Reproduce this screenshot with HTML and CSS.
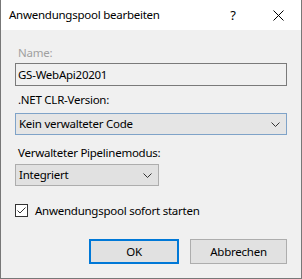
FILE: index.html
```html
<!DOCTYPE html>
<html lang="de">
<head>
    <meta charset="UTF-8">
    <title>Anwendungspool bearbeiten</title>
    <link rel="stylesheet" href="styles.css">
</head>
<body>
    <div class="dialog">
        <div class="titlebar">
            <span class="title">Anwendungspool bearbeiten</span>
            <span class="help">?</span>
            <span class="close">
                <svg width="11" height="11" viewBox="0 0 11 11">
                    <path d="M0.5 0.5 L10.5 10.5 M10.5 0.5 L0.5 10.5" stroke="#000" stroke-width="1" fill="none"/>
                </svg>
            </span>
        </div>

        <div class="content">
            <label class="label disabled lbl-name">Name:</label>
            <div class="textbox">GS-WebApi20201</div>

            <label class="label lbl-clr">.NET CLR-Version:</label>
            <div class="combo focused">
                <span>Kein verwalteter Code</span>
                <svg class="chevron" width="9" height="5" viewBox="0 0 9 5">
                    <path d="M0.5 0.5 L4.5 4.5 L8.5 0.5" stroke="#333" stroke-width="1" fill="none"/>
                </svg>
            </div>

            <label class="label lbl-pipe">Verwalteter Pipelinemodus:</label>
            <div class="combo small">
                <span>Integriert</span>
                <svg class="chevron" width="9" height="5" viewBox="0 0 9 5">
                    <path d="M0.5 0.5 L4.5 4.5 L8.5 0.5" stroke="#333" stroke-width="1" fill="none"/>
                </svg>
            </div>

            <div class="check-row">
                <span class="checkbox">
                    <svg width="11" height="11" viewBox="0 0 11 11">
                        <path d="M1.5 5.5 L4 8 L9.5 2.5" stroke="#333" stroke-width="1" fill="none"/>
                    </svg>
                </span>
                <span>Anwendungspool sofort starten</span>
            </div>

            <div class="buttons">
                <button class="btn btn-ok">OK</button>
                <button class="btn btn-cancel">Abbrechen</button>
            </div>
        </div>
    </div>
</body>
</html>
```

FILE: styles.css
```css
body {
    margin: 0;
    padding: 0;
    font-family: "Noto Sans", "Liberation Sans", sans-serif;
    font-size: 11.5px;
    letter-spacing: -0.25px;
    color: #000;
}

.dialog {
    width: 302px;
    height: 279px;
    box-sizing: border-box;
    border: 1px solid #777;
    border-top: none;
    background-color: #f0f0f0;
    display: flex;
    flex-direction: column;
}

.titlebar {
    height: 30px;
    background-color: #fff;
    display: flex;
    align-items: center;
    padding-left: 8px;
    flex-shrink: 0;
}

.title {
    flex: 1;
    line-height: 16px;
}

.help {
    width: 46px;
    text-align: center;
    font-size: 13px;
    margin-right: 0;
}

.close {
    width: 45px;
    display: flex;
    justify-content: center;
    align-items: center;
}

.content {
    padding: 0 14px;
    display: flex;
    flex-direction: column;
}

.label {
    line-height: 16px;
}

.disabled {
    color: #a0a0a0;
}

.lbl-name {
    margin-top: 15px;
    margin-left: 3px;
}

.lbl-clr {
    margin-top: 6px;
    margin-left: 3px;
}

.lbl-pipe {
    margin-top: 10px;
    margin-left: 3px;
}

.textbox {
    margin-top: 2px;
    height: 23px;
    box-sizing: border-box;
    border: 1px solid #7a7a7a;
    background-color: #f0f0f0;
    padding-left: 2px;
    line-height: 21px;
}

.combo {
    margin-top: 5px;
    height: 22px;
    box-sizing: border-box;
    border: 1px solid #adadad;
    background-color: #e5e5e5;
    display: flex;
    align-items: center;
    justify-content: space-between;
    padding: 0 6px 0 3px;
    line-height: 20px;
}

.combo.focused {
    border-color: #7fa3c8;
}

.combo.small {
    width: 144px;
    margin-top: 3px;
    background-color: #e1e1e1;
}

.chevron {
    display: block;
}

.check-row {
    margin-top: 16px;
    height: 16px;
    display: flex;
    align-items: center;
}

.checkbox {
    width: 13px;
    height: 13px;
    box-sizing: border-box;
    border: 1px solid #333;
    background-color: #fff;
    margin-right: 7px;
    display: flex;
    align-items: center;
    justify-content: center;
}

.buttons {
    margin-top: 21px;
    display: flex;
    justify-content: flex-end;
    gap: 11px;
}

.btn {
    height: 25px;
    box-sizing: border-box;
    font-family: inherit;
    font-size: 11.5px;
    letter-spacing: -0.25px;
    color: #000;
    background-color: #e1e1e1;
    border: 1px solid #adadad;
    padding: 0;
    margin: 0;
}

.btn-ok {
    width: 90px;
    border: 2px solid #0078d7;
}

.btn-cancel {
    width: 97px;
}
```
